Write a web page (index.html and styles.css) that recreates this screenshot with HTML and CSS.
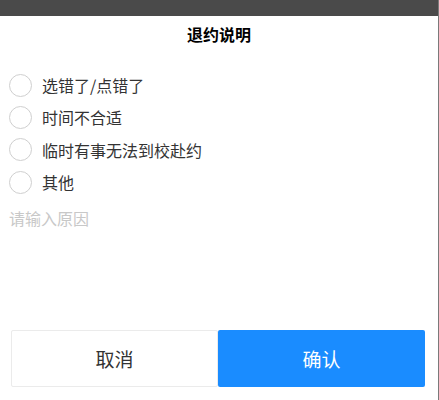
FILE: index.html
```html
<!DOCTYPE html>
<html lang="zh-CN">
<head>
<meta charset="utf-8">
<title>退约说明</title>
<link rel="stylesheet" href="styles.css">
</head>
<body>
<div class="screen">
  <div class="panel">
    <div class="topbar"></div>
    <div class="title">退约说明</div>
    <ul class="options">
      <li class="option"><span class="radio"></span><span class="label">选错了/点错了</span></li>
      <li class="option"><span class="radio"></span><span class="label">时间不合适</span></li>
      <li class="option"><span class="radio"></span><span class="label">临时有事无法到校赴约</span></li>
      <li class="option"><span class="radio"></span><span class="label">其他</span></li>
    </ul>
    <div class="reason">请输入原因</div>
    <div class="footer">
      <button class="btn btn-cancel">取消</button>
      <button class="btn btn-ok">确认</button>
    </div>
  </div>
</div>
</body>
</html>
```
FILE: styles.css
```css
* { box-sizing: border-box; }
html, body { margin: 0; padding: 0; background: #fff; }
body {
  font-family: "Noto Sans CJK SC", "Noto Sans", sans-serif;
  color: #333;
}
.screen {
  display: flex;
  width: 439px;
  height: 400px;
}
.panel {
  width: 439px;
  height: 400px;
  border-right: 1px solid #7a7a7a;
  display: flex;
  flex-direction: column;
  background: #fff;
}
.topbar {
  height: 16px;
  background: #4a4a4a;
  flex: none;
}
.title {
  height: 40px;
  line-height: 36px;
  text-align: center;
  font-size: 16px;
  font-weight: bold;
  color: #000;
}
.options {
  list-style: none;
  margin: 0;
  padding: 13px 0 0 9px;
}
.option {
  display: flex;
  align-items: center;
  height: 32.3px;
}
.radio {
  width: 23px;
  height: 23px;
  border: 1px solid #cfcfcf;
  border-radius: 50%;
  flex: none;
}
.label {
  margin-left: 10px;
  font-size: 16px;
  line-height: 20px;
  color: #333;
}
.reason {
  padding: 10px 0 0 9px;
  font-size: 16px;
  line-height: 20px;
  color: #c8c8c8;
  flex: 1;
}
.footer {
  display: flex;
  padding: 0 0 13px 11px;
}
.btn {
  flex: none;
  width: 207px;
  height: 57px;
  font-family: inherit;
  font-size: 19px;
  border-radius: 2px;
  margin: 0;
  padding: 0;
}
.btn-cancel {
  background: #fff;
  border: 1px solid #ebebeb;
  color: #333;
}
.btn-ok {
  background: #1a8cff;
  border: none;
  color: #fff;
}
```
